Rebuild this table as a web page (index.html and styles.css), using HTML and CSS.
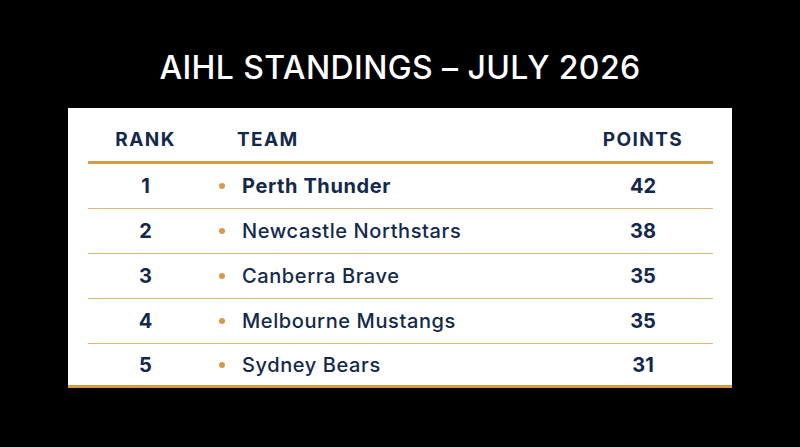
FILE: index.html
```html
<!DOCTYPE html>
<html>
<head>
<meta charset="utf-8">
<link rel="stylesheet" href="styles.css">
</head>
<body>
<main class="page">
  <h1 class="title">AIHL STANDINGS – JULY 2026</h1>
  <section class="card">
    <div class="row head">
      <div class="rank">RANK</div>
      <div class="team">TEAM</div>
      <div class="pts">POINTS</div>
    </div>
    <div class="row first">
      <div class="rank">1</div>
      <div class="team"><span class="dot"></span><span class="name strong">Perth Thunder</span></div>
      <div class="pts">42</div>
    </div>
    <div class="row">
      <div class="rank">2</div>
      <div class="team"><span class="dot"></span><span class="name">Newcastle Northstars</span></div>
      <div class="pts">38</div>
    </div>
    <div class="row">
      <div class="rank">3</div>
      <div class="team"><span class="dot"></span><span class="name">Canberra Brave</span></div>
      <div class="pts">35</div>
    </div>
    <div class="row">
      <div class="rank">4</div>
      <div class="team"><span class="dot"></span><span class="name">Melbourne Mustangs</span></div>
      <div class="pts">35</div>
    </div>
    <div class="row last">
      <div class="rank">5</div>
      <div class="team"><span class="dot"></span><span class="name">Sydney Bears</span></div>
      <div class="pts">31</div>
    </div>
  </section>
</main>
</body>
</html>
```
FILE: styles.css
```css
html, body {
  margin: 0;
  padding: 0;
  background: #000;
}
.page {
  width: 800px;
  height: 447px;
  background: #000;
  display: flex;
  flex-direction: column;
  align-items: center;
  font-family: Inter, "Noto Sans", sans-serif;
}
.title {
  margin: 47px 0 0;
  height: 42px;
  line-height: 42px;
  color: #fff;
  font-size: 32px;
  font-weight: 500;
  letter-spacing: 0.4px;
}
.card {
  margin-top: 19px;
  width: 664px;
  box-sizing: border-box;
  background: #fff;
  padding: 0 19px 0 20px;
  border-bottom: 3px solid #d49a45;
}
.row {
  display: grid;
  grid-template-columns: 115px 370px 140px;
  height: 45px;
  box-sizing: border-box;
  align-items: center;
  border-bottom: 1px solid #dcb67a;
  color: #13294b;
  font-size: 20px;
}
.row.head {
  border-bottom: 3px solid #d49a45;
  font-weight: 700;
  font-size: 19px;
  letter-spacing: 1.4px;
  align-items: end;
  padding-bottom: 10px;
  height: 56px;
}
.row.last {
  border-bottom: none;
  height: 41px;
}
.rank, .pts {
  text-align: center;
  font-weight: 700;
}
.team {
  display: flex;
  align-items: center;
  padding-left: 16px;
  font-weight: 500;
  letter-spacing: 0.6px;
}
.head .team {
  padding-left: 34px;
  font-weight: 700;
  letter-spacing: 1.4px;
}
.dot {
  width: 6px;
  height: 6px;
  border-radius: 50%;
  background: #d99a45;
  margin-right: 17px;
}
.name.strong {
  font-weight: 700;
}
```
